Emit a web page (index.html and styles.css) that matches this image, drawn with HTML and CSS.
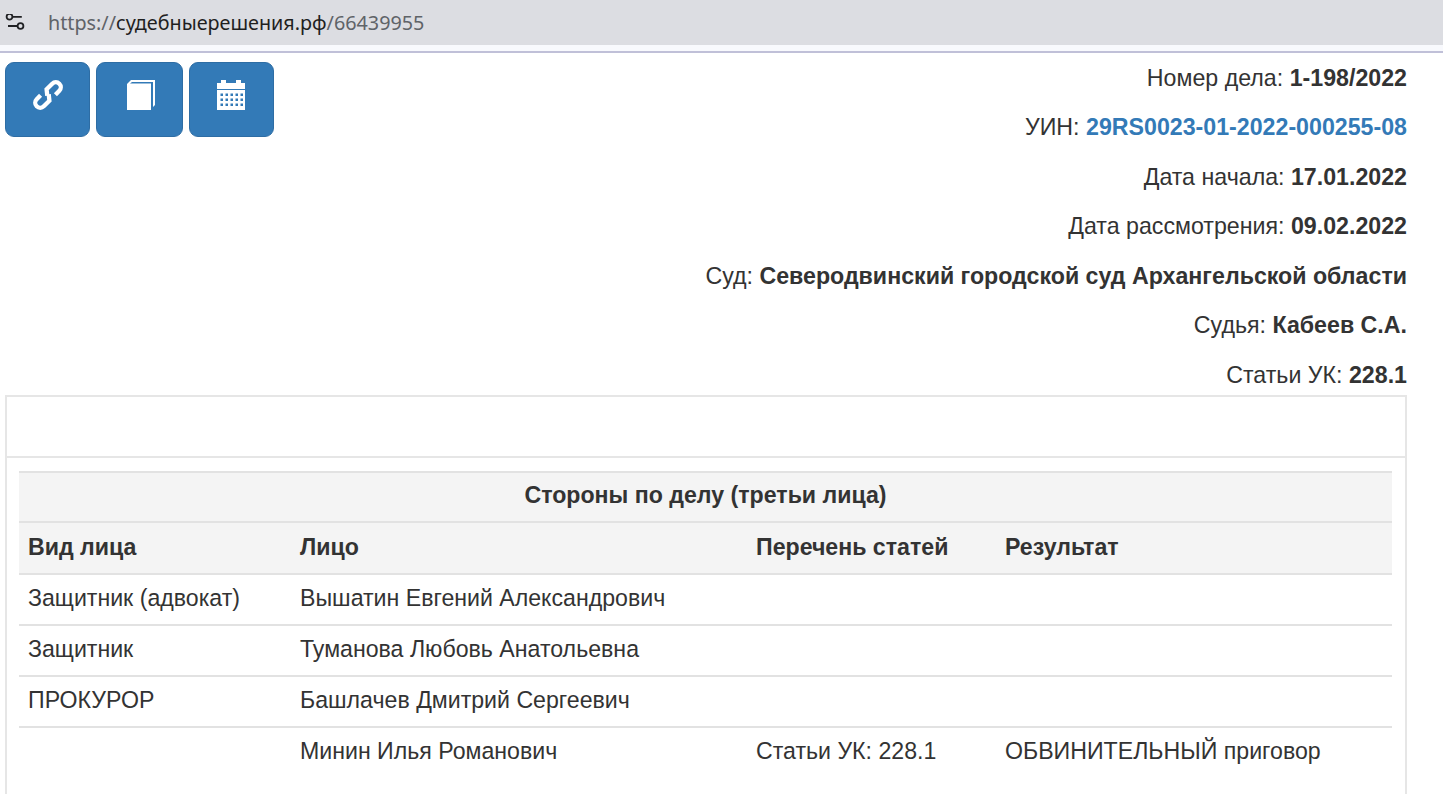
FILE: index.html
```html
<!DOCTYPE html>
<html lang="ru">
<head>
<meta charset="utf-8">
<title>Судебные решения</title>
<link rel="stylesheet" href="styles.css">
</head>
<body>
<header class="browser-bar">
  <svg class="tune" width="20" height="18" viewBox="0 0 20 18" fill="none" stroke="#202124" stroke-width="1.8"><circle cx="4.500" cy="2.800" r="2.900"/><path d="M7.400 2.800h9.400M3 12h9.600"/><circle cx="15.500" cy="12" r="2.900"/></svg>
  <div class="url"><span class="dim">https://</span>судебныерешения.рф<span class="dim">/66439955</span></div>
</header>
<div class="browser-gap"></div>
<main class="page">
  <div class="top">
    <div class="buttons">
      <button class="btn btn-a" type="button"><svg width="30" height="30" viewBox="0 0 30 30" fill="none" stroke="#fff" stroke-width="4.300"><g transform="rotate(-45 15 15)"><path d="M20.500 20H26a5 5 0 0 0 0-10H18L14 15"/><path d="M9.500 10H4a5 5 0 0 0 0 10H12L16 15"/></g></svg></button>
      <button class="btn btn-b" type="button"><svg width="29" height="30" viewBox="0 0 29 30" fill="#fff"><path d="M0 4L4 0H28V25L26 27V2H5L3 3.500H24V30H0Z"/></svg></button>
      <button class="btn btn-c" type="button"><svg width="28" height="30" viewBox="0 0 28 30" fill="#fff"><path d="M0 3H4V0H9V3H19V0H24V3H28V9H0Z"/><path d="M0 10H28V30H0Z"/><path class="dots" d="M3.500 13.500h2.500v2.500h-2.500zM8.500 13.500h2.500v2.500h-2.500zM13.500 13.500h2.500v2.500h-2.500zM18.500 13.500h2.500v2.500h-2.500zM23.500 13.500h2.500v2.500h-2.500zM3.500 18.500h2.500v2.500h-2.500zM8.500 18.500h2.500v2.500h-2.500zM13.500 18.500h2.500v2.500h-2.500zM18.500 18.500h2.500v2.500h-2.500zM23.500 18.500h2.500v2.500h-2.500zM3.500 23.500h2.500v2.500h-2.500zM8.500 23.500h2.500v2.500h-2.500zM13.500 23.500h2.500v2.500h-2.500zM18.500 23.500h2.500v2.500h-2.500zM23.500 23.500h2.500v2.500h-2.500z"/></svg></button>
    </div>
    <div class="meta">
      <p>Номер дела: <b>1-198/2022</b></p>
      <p>УИН: <a href="#">29RS0023-01-2022-000255-08</a></p>
      <p>Дата начала: <b>17.01.2022</b></p>
      <p>Дата рассмотрения: <b>09.02.2022</b></p>
      <p>Суд: <b>Северодвинский городской суд Архангельской области</b></p>
      <p>Судья: <b>Кабеев С.А.</b></p>
      <p>Статьи УК: <b>228.1</b></p>
    </div>
  </div>
  <section class="panel">
    <div class="panel-head"></div>
    <div class="panel-body">
      <table>
        <colgroup><col class="c1"><col class="c2"><col class="c3"><col class="c4"></colgroup>
        <thead>
          <tr class="shade"><th colspan="4" class="center">Стороны по делу (третьи лица)</th></tr>
          <tr class="shade"><th>Вид лица</th><th>Лицо</th><th>Перечень статей</th><th>Результат</th></tr>
        </thead>
        <tbody>
          <tr><td>Защитник (адвокат)</td><td>Вышатин Евгений Александрович</td><td></td><td></td></tr>
          <tr><td>Защитник</td><td>Туманова Любовь Анатольевна</td><td></td><td></td></tr>
          <tr><td>ПРОКУРОР</td><td>Башлачев Дмитрий Сергеевич</td><td></td><td></td></tr>
          <tr><td></td><td>Минин Илья Романович</td><td>Статьи УК: 228.1</td><td>ОБВИНИТЕЛЬНЫЙ приговор</td></tr>
        </tbody>
      </table>
    </div>
  </section>
</main>
</body>
</html>
```
FILE: styles.css
```css
* { box-sizing: border-box; }
html, body { margin: 0; padding: 0; height: 794px; overflow: hidden; background: #fff; }
body { font-family: "Liberation Sans", Arial, sans-serif; font-size: 23.2px; color: #333; }
.browser-bar { height: 45px; background: #dcdde2; display: flex; align-items: center; padding-left: 5px; gap: 23px; }
.tune { flex: none; }
.url { font-family: "Noto Sans", "Open Sans", sans-serif; font-size: 19.75px; color: #1f1f1f; }
.dim { color: #5f6368; }
.browser-gap { height: 8px; background: #f8f9fd; border-bottom: 2px solid #c0c0d8; }
.page { padding: 0 36px 0 5px; }
.top { display: flex; justify-content: space-between; padding-bottom: 3px; }
.buttons { display: flex; gap: 6px; padding-top: 9px; align-items: flex-start; }
.btn { height: 75px; background: #337ab7; border: 1px solid #2e6da4; border-radius: 9px; display: flex; align-items: center; justify-content: center; padding: 0 0 9px; }
.btn-a { width: 85px; }
.btn-b { width: 87px; padding-left: 3px; }
.btn-c { width: 85px; padding-right: 2px; }
.dots { fill: #337ab7; }
.meta { text-align: right; padding-top: 8.500px; }
.meta p { margin: 0 0 16.500px; line-height: 33px; }
.meta p:last-child { margin-bottom: 0; }
.meta a { color: #337ab7; font-weight: bold; text-decoration: none; }
.panel { border: 2px solid #e6e6e6; border-bottom: 0; height: 399px; }
.panel-head { height: 61px; border-bottom: 2px solid #e6e6e6; }
.panel-body { padding: 13px 13px 0 12px; }
table { width: 100%; border-collapse: collapse; table-layout: fixed; }
.c1 { width: 272px; }
.c2 { width: 456px; }
.c3 { width: 249px; }
th, td { height: 51px; padding: 0 9px 2px; text-align: left; border-top: 2px solid #e2e2e2; font-size: 23.15px; }
.shade th { background: #f4f4f4; }
.shade:first-child th { height: 50px; }
.shade + .shade th { height: 52px; padding-bottom: 0; }
th.center { text-align: center; }
```
